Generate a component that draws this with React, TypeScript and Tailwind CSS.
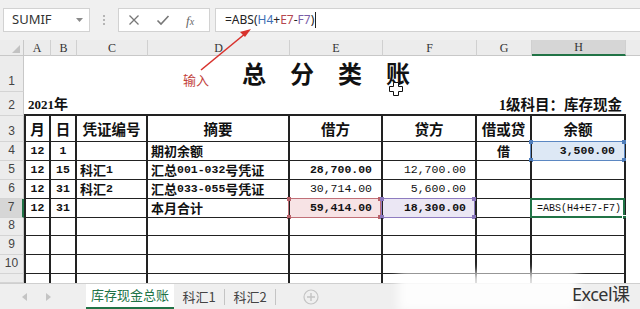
import React from "react";

const CJK = '"Noto Sans CJK SC", sans-serif';
const MONO = '"Liberation Mono", "Noto Sans CJK SC", monospace';

const colTemplate = "24px 27px 26px 71px 142px 93px 94px 55px 94px 1fr";
const rowTemplate = "16px 36px 24px 26px 19px 19px 19px 19px 18px 19px 19px 9px";

// splits ascii runs so digits render smaller and monospaced, like SimSun half-width
function Mixed({ s }: { s: string }) {
  const parts = s.split(/([\x00-\x7F]+)/).filter(Boolean);
  return (
    <>
      {parts.map((p, i) =>
        /^[\x00-\x7F]+$/.test(p) ? (
          <span key={i} className="text-[11.5px]" style={{ fontFamily: MONO }}>
            {p}
          </span>
        ) : (
          <span key={i} className="text-[13px]" style={{ fontFamily: CJK }}>
            {p}
          </span>
        )
      )}
    </>
  );
}

type CellSpec = { t: string; bold?: boolean };

const body: { n: number; cells: CellSpec[] }[] = [
  {
    n: 4,
    cells: [
      { t: "12", bold: true },
      { t: "1", bold: true },
      { t: "" },
      { t: "期初余额", bold: true },
      { t: "" },
      { t: "" },
      { t: "借", bold: true },
      { t: "3,500.00", bold: true },
    ],
  },
  {
    n: 5,
    cells: [
      { t: "12", bold: true },
      { t: "15", bold: true },
      { t: "科汇1", bold: true },
      { t: "汇总001-032号凭证", bold: true },
      { t: "28,700.00", bold: true },
      { t: "12,700.00" },
      { t: "" },
      { t: "" },
    ],
  },
  {
    n: 6,
    cells: [
      { t: "12", bold: true },
      { t: "31", bold: true },
      { t: "科汇2", bold: true },
      { t: "汇总033-055号凭证", bold: true },
      { t: "30,714.00" },
      { t: "5,600.00" },
      { t: "" },
      { t: "" },
    ],
  },
  {
    n: 7,
    cells: [
      { t: "12", bold: true },
      { t: "31", bold: true },
      { t: "" },
      { t: "本月合计", bold: true },
      { t: "59,414.00", bold: true },
      { t: "18,300.00", bold: true },
      { t: "" },
      { t: "=ABS(H4+E7-F7)" },
    ],
  },
  { n: 8, cells: Array(8).fill({ t: "" }) },
  { n: 9, cells: Array(8).fill({ t: "" }) },
  { n: 10, cells: Array(8).fill({ t: "" }) },
  { n: 11, cells: Array(8).fill({ t: "" }) },
];

const align = [
  "justify-center",
  "justify-center",
  "justify-start pl-[3px]",
  "justify-start pl-[3px]",
  "justify-end pr-[9px]",
  "justify-end pr-[9px]",
  "justify-center",
  "justify-end pr-[9px]",
];

function Corners({ color }: { color: string }) {
  return (
    <>
      <span className={`absolute -left-[2px] -top-[2px] w-[4px] h-[4px] ${color}`} />
      <span className={`absolute -right-[2px] -top-[2px] w-[4px] h-[4px] ${color}`} />
      <span className={`absolute -left-[2px] -bottom-[2px] w-[4px] h-[4px] ${color}`} />
      <span className={`absolute -right-[2px] -bottom-[2px] w-[4px] h-[4px] ${color}`} />
    </>
  );
}

function RowHead({ n, active }: { n: number | string; active?: boolean }) {
  return (
    <div
      className={`flex items-end justify-center pb-[1px] text-[12px] text-[#444] border-b border-[#d4d4d4] ${
        active ? "bg-[#d6d6d6] border-r-2 border-r-[#217346]" : "bg-[#ececec] border-r border-r-[#c8c8c8]"
      }`}
      style={{ fontFamily: '"Liberation Sans", sans-serif' }}
    >
      {n}
    </div>
  );
}

export default function App() {
  const letters = ["A", "B", "C", "D", "E", "F", "G", "H"];
  const headers = ["月", "日", "凭证编号", "摘要", "借方", "贷方", "借或贷", "余额"];

  return (
    <div className="relative w-[640px] h-[309px] overflow-hidden bg-white select-none">
      {/* formula bar */}
      <div className="h-[40px] bg-[#f0f0f0] flex items-start pt-[8px]">
        <div className="ml-[3px] w-[87px] h-[24px] bg-white border border-[#d2d2d2] flex items-center justify-between pl-[8px] pr-[6px]">
          <span className="text-[13px] text-[#333]" style={{ fontFamily: '"Noto Sans", sans-serif' }}>
            SUMIF
          </span>
          <svg width="7" height="5" viewBox="0 0 7 5">
            <path d="M0 0 L7 0 L3.5 4 Z" fill="#8a8a8a" />
          </svg>
        </div>
        <div className="w-[28px] h-[24px] flex flex-col items-center justify-center gap-[2px]">
          <span className="w-[2px] h-[2px] bg-[#b5b5b5]" />
          <span className="w-[2px] h-[2px] bg-[#b5b5b5]" />
          <span className="w-[2px] h-[2px] bg-[#b5b5b5]" />
        </div>
        <div className="w-[92px] h-[24px] bg-white border border-[#d2d2d2] flex items-center pl-[9px] gap-[16px]">
          <svg width="12" height="12" viewBox="0 0 12 12">
            <path d="M1.5 1.5 L10.5 10.5 M10.5 1.5 L1.5 10.5" stroke="#777" strokeWidth="1.3" />
          </svg>
          <svg width="14" height="12" viewBox="0 0 14 12">
            <path d="M1.5 6.5 L5 10 L12.5 2" stroke="#777" strokeWidth="1.6" fill="none" />
          </svg>
          <span
            className="text-[13px] italic text-[#666] leading-none"
            style={{ fontFamily: '"Liberation Serif", serif' }}
          >
            f<span className="text-[10px]">x</span>
          </span>
        </div>
        <div className="ml-[5px] flex-1 h-[24px] bg-white border-y border-l border-[#d2d2d2] flex items-center pl-[9px]">
          <span className="text-[12px] text-[#222]" style={{ fontFamily: '"Noto Sans", sans-serif' }}>
            =ABS(<span className="text-[#3d6eb4]">H4</span>+<span className="text-[#b4474e]">E7</span>-
            <span className="text-[#7a5ea8]">F7</span>)
          </span>
          <span className="ml-[1px] w-px h-[16px] bg-[#222]" />
        </div>
      </div>

      {/* sheet */}
      <div className="h-[243px] overflow-hidden">
        <div className="grid" style={{ gridTemplateColumns: colTemplate, gridTemplateRows: rowTemplate }}>
          {/* column header */}
          <div className="bg-[#ececec] border-r border-b border-[#c8c8c8] relative">
            <svg className="absolute right-[3px] bottom-[2px]" width="8" height="8" viewBox="0 0 8 8">
              <path d="M8 0 L8 8 L0 8 Z" fill="#c2c2c2" />
            </svg>
          </div>
          {letters.map((l) => (
            <div
              key={l}
              className={`flex items-center justify-center text-[12px] text-[#333] border-r border-[#d0d0d0] ${
                l === "H" ? "bg-[#d6d6d6] border-b-2 border-b-[#217346]" : "bg-[#ececec] border-b border-b-[#c8c8c8]"
              }`}
              style={{ fontFamily: '"Liberation Serif", serif' }}
            >
              {l}
            </div>
          ))}
          <div className="bg-[#ececec] border-b border-[#c8c8c8]" />

          {/* row 1 title */}
          <RowHead n={1} />
          <div className="col-span-8 flex items-center justify-center pb-[3px] pl-[2px]">
            <span
              className="text-[24px] font-bold text-[#111] tracking-[24px] leading-none"
              style={{ fontFamily: CJK }}
            >
              总分类<span className="tracking-normal">账</span>
            </span>
          </div>
          <div />

          {/* row 2 */}
          <RowHead n={2} />
          <div
            className="col-span-8 flex items-center justify-between pl-[4px] pr-[4px] pt-[2px] border-b-2 border-[#222] font-bold text-[#111]"
            style={{ fontFamily: CJK }}
          >
            <span className="text-[14px]">
              <span className="text-[13px]" style={{ fontFamily: '"Liberation Serif", serif' }}>2021</span>年
            </span>
            <span className="text-[14.5px]">
              <span className="text-[14px]" style={{ fontFamily: '"Liberation Serif", serif' }}>1</span>级科目：库存现金
            </span>
          </div>
          <div />

          {/* row 3 headers */}
          <RowHead n={3} />
          {headers.map((h, i) => (
            <div
              key={h}
              className={`flex items-center justify-center text-[14.5px] font-bold text-[#111] border-r-2 border-b border-[#222] ${
                i === 0 ? "border-l-2" : ""
              }`}
              style={{ fontFamily: CJK }}
            >
              {h}
            </div>
          ))}
          <div />

          {/* body rows */}
          {body.map((r) => (
            <React.Fragment key={r.n}>
              <RowHead n={r.n === 11 ? "" : r.n} active={r.n === 7} />
              {r.cells.map((c, i) => {
                const isH4 = r.n === 4 && i === 7;
                const isE7 = r.n === 7 && i === 4;
                const isF7 = r.n === 7 && i === 5;
                const isH7 = r.n === 7 && i === 7;
                const bg = isH4 ? "bg-[#dde8f5]" : isE7 ? "bg-[#f7e3e5]" : isF7 ? "bg-[#ebe7f4]" : "";
                return (
                  <div
                    key={i}
                    className={`relative flex items-center whitespace-nowrap text-[#111] border-r-2 border-[#222] ${
                      r.n === 11 ? "" : "border-b"
                    } ${i === 0 ? "border-l-2" : ""} ${isH7 ? "justify-start pl-[5px]" : align[i]} ${bg} ${
                      c.bold ? "font-bold" : ""
                    }`}
                  >
                    {isH7 ? (
                      <span className="text-[10px]" style={{ fontFamily: MONO }}>
                        {c.t}
                      </span>
                    ) : (
                      <Mixed s={c.t} />
                    )}
                    {isH4 && (
                      <div className="absolute -left-[2px] -top-px right-[-1px] bottom-[-1px] border border-[#5b87c2]">
                        <Corners color="bg-[#4f7dba]" />
                      </div>
                    )}
                    {isE7 && (
                      <div className="absolute -left-[2px] -top-px right-0 bottom-[-1px] border border-[#c07078]">
                        <Corners color="bg-[#b86068]" />
                      </div>
                    )}
                    {isF7 && (
                      <div className="absolute -left-[2px] -top-px right-0 bottom-[-1px] border border-[#8e7cc0]">
                        <Corners color="bg-[#8a76bc]" />
                      </div>
                    )}
                    {isH7 && (
                      <div className="absolute -left-[2px] -top-px right-[-1px] bottom-[-1px] border-2 border-[#217346]">
                        <span className="absolute -right-[4px] -bottom-[4px] w-[5px] h-[5px] bg-[#217346] border border-white" />
                      </div>
                    )}
                  </div>
                );
              })}
              <div />
            </React.Fragment>
          ))}
        </div>
      </div>

      {/* sheet tabs */}
      <div className="h-[26px] bg-[#efefef] border-t border-[#cfcfcf] flex items-center text-[13px]" style={{ fontFamily: CJK }}>
        <div className="w-[86px] flex items-center pl-[22px] gap-[19px] text-[#bdbdbd]">
          <svg width="5" height="8" viewBox="0 0 5 8">
            <path d="M5 0 L0 4 L5 8 Z" fill="#c4c4c4" />
          </svg>
          <svg width="5" height="8" viewBox="0 0 5 8">
            <path d="M0 0 L5 4 L0 8 Z" fill="#c4c4c4" />
          </svg>
        </div>
        <div className="h-full w-[88px] bg-white flex items-center justify-center text-[#217346] border-b-2 border-[#217346] -mt-px">
          库存现金总账
        </div>
        <div className="w-[50px] flex items-center justify-center text-[#444]">科汇1</div>
        <span className="w-px h-[16px] bg-[#c4c4c4]" />
        <div className="w-[50px] flex items-center justify-center text-[#444]">科汇2</div>
        <span className="w-px h-[16px] bg-[#c4c4c4]" />
        <div className="ml-[27px]">
          <svg width="16" height="16" viewBox="0 0 16 16">
            <circle cx="8" cy="8" r="7" fill="none" stroke="#c4c4c4" strokeWidth="1.2" />
            <path d="M8 4 V12 M4 8 H12" stroke="#c4c4c4" strokeWidth="1.4" />
          </svg>
        </div>
      </div>

      {/* annotation: arrow + 输入 */}
      <svg className="absolute left-0 top-0 pointer-events-none" width="640" height="309">
        <line x1="201" y1="70" x2="246" y2="33" stroke="#d8322d" strokeWidth="1.6" />
        <path d="M251 29 L240 32 L245 37 Z" fill="#d8322d" />
      </svg>
      <span className="absolute left-[183px] top-[70px] text-[13px] text-[#c2413b]" style={{ fontFamily: CJK }}>
        输入
      </span>

      {/* cross cursor */}
      <svg className="absolute left-[389px] top-[82px]" width="14" height="14" viewBox="0 0 14 14">
        <path
          d="M4.5 0.5 H9.5 V4.5 H13.5 V9.5 H9.5 V13.5 H4.5 V9.5 H0.5 V4.5 H4.5 Z"
          fill="white"
          stroke="#111"
          strokeWidth="1"
        />
      </svg>

      {/* watermark */}
      <div className="absolute left-[398px] top-[272px] w-[180px] h-[40px] bg-white/85 blur-[5px]" />
      <span
        className="absolute left-[572px] top-[281px] text-[18px] text-[#333] tracking-[-0.5px]"
        style={{ fontFamily: '"Noto Sans", "Noto Sans CJK SC", sans-serif' }}
      >
        Excel课
      </span>
    </div>
  );
}
